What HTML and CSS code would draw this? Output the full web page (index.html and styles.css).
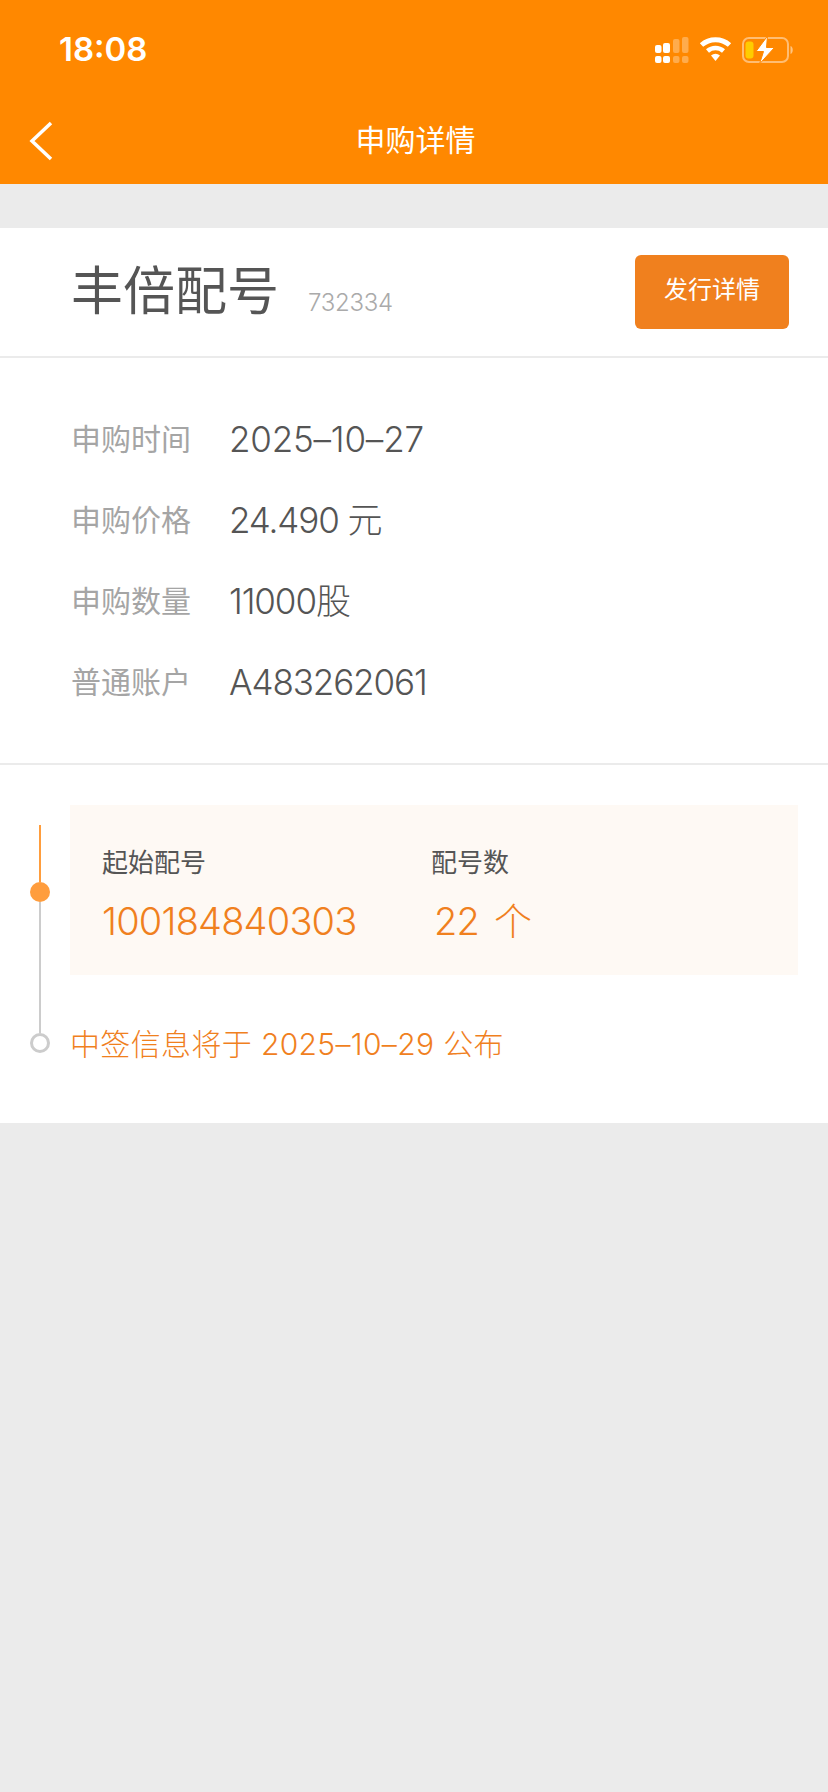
FILE: index.html
```html
<!DOCTYPE html>
<html lang="zh">
<head>
<meta charset="utf-8">
<title>申购详情</title>
<link rel="stylesheet" href="styles.css">
</head>
<body>
<header class="header">
  <div class="status">
    <span class="time">18:08</span>
    <div class="status-icons">
      <svg class="i-signal" width="34" height="26" viewBox="0 0 34 26">
        <g fill="#fff">
          <rect x="0" y="8" width="6.500" height="8" rx="2"/><rect x="8" y="6" width="7" height="10" rx="2"/>
          <rect x="0" y="19" width="6.500" height="7" rx="2"/><rect x="8" y="19" width="7" height="7" rx="2"/>
        </g>
        <g fill="#fff" fill-opacity=".3">
          <rect x="18" y="2" width="6.500" height="14" rx="2"/><rect x="27" y="0" width="6.500" height="16" rx="2"/>
          <rect x="18" y="19" width="6.500" height="7" rx="2"/><rect x="27" y="19" width="6.500" height="7" rx="2"/>
        </g>
      </svg>
      <svg class="i-wifi" width="31" height="26" viewBox="0 0 31 26">
        <path d="M1.500 8 A21 21 0 0 1 29.500 8" fill="none" stroke="#fff" stroke-width="5"/>
        <path d="M7.500 14 A12 12 0 0 1 23.500 14" fill="none" stroke="#fff" stroke-width="4.500"/>
        <path d="M11 18.500 A7 7 0 0 1 20 18.500 L15.500 24 Z" fill="#fff"/>
      </svg>
      <svg class="i-batt" width="52" height="26" viewBox="0 0 52 26">
        <rect x="1" y="1" width="45" height="24" rx="6" fill="none" stroke="#fff" stroke-opacity=".45" stroke-width="2"/>
        <path d="M48.500 9 C51.500 10 51.500 16 48.500 17 Z" fill="#fff" fill-opacity=".5"/>
        <rect x="3.500" y="4.500" width="8" height="17" rx="3" fill="#ffcc00"/>
        <path d="M25.500 -1 L14 14.500 H21.500 L17.500 27 L32.500 10.500 H24.500 Z" fill="#fff" stroke="#ff8800" stroke-width="1"/>
      </svg>
    </div>
  </div>
  <div class="nav">
    <svg class="back" width="24" height="40" viewBox="0 0 24 40">
      <path d="M22 2 L3 20 L22 38" fill="none" stroke="#fff" stroke-width="3.500"/>
    </svg>
    <h1 class="nav-title">申购详情</h1>
  </div>
</header>

<main class="card">
  <section class="head-row">
    <div class="stock">
      <span class="stock-name">丰倍配号</span>
      <span class="stock-code">732334</span>
    </div>
    <button class="detail-btn">发行详情</button>
  </section>

  <section class="info">
    <div class="info-row"><span class="info-label">申购时间</span><span class="info-value info-date">2025–10–27</span></div>
    <div class="info-row"><span class="info-label">申购价格</span><span class="info-value">24.490 元</span></div>
    <div class="info-row"><span class="info-label">申购数量</span><span class="info-value">11000股</span></div>
    <div class="info-row"><span class="info-label">普通账户</span><span class="info-value">A483262061</span></div>
  </section>

  <section class="timeline">
    <div class="rail">
      <span class="seg seg-orange"></span>
      <span class="dot dot-on"></span>
      <span class="seg seg-gray"></span>
      <span class="dot dot-off"></span>
    </div>
    <div class="tl-body">
      <div class="peihao">
        <div class="ph-col ph-start">
          <span class="ph-label">起始配号</span>
          <span class="ph-value">100184840303</span>
        </div>
        <div class="ph-col">
          <span class="ph-label">配号数</span>
          <span class="ph-value ph-count">22 个</span>
        </div>
      </div>
      <p class="notice">中签信息将于 2025–10–29 公布</p>
    </div>
  </section>
</main>
</body>
</html>
```
FILE: styles.css
```css
* { box-sizing: border-box; }
html, body { margin: 0; padding: 0; }
body {
  width: 828px;
  min-height: 1792px;
  background: #ebebeb;
  font-family: Inter, "Noto Sans CJK SC", sans-serif;
  color: #555;
}
.header { height: 184px; background: #ff8800; color: #fff; }
.status {
  height: 100px;
  display: flex;
  align-items: flex-start;
  justify-content: space-between;
  padding: 29px 34px 0 59px;
}
.time { font-size: 33px; line-height: 40px; font-weight: 600; }
.status-icons { display: flex; align-items: center; gap: 11px; padding-top: 8px; }
.i-signal, .i-wifi, .i-batt { display: block; overflow: visible; }
.nav { height: 84px; position: relative; display: flex; align-items: center; justify-content: center; padding: 0 0 4px 3px; }
.back { position: absolute; left: 29px; top: 21px; }
.nav-title { margin: 0; font-size: 30px; font-weight: 400; line-height: 40px; }

.card { margin-top: 44px; background: #fff; }
.head-row {
  height: 130px;
  border-bottom: 2px solid #ebebeb;
  display: flex;
  align-items: flex-start;
  justify-content: space-between;
  padding: 27px 39px 0 71px;
}
.stock { display: flex; align-items: baseline; gap: 29px; padding-top: 5px; }
.stock-name { font-size: 52px; line-height: 64px; font-weight: 400; color: #555; }
.stock-code { font-size: 24px; line-height: 32px; color: #aaa; font-weight: 300; letter-spacing: -0.3px; position: relative; top: 1px; }
.detail-btn {
  width: 154px;
  height: 74px;
  margin: 0;
  border: 0;
  border-radius: 6px;
  background: #f0801e;
  color: #fff;
  font: 400 24px/34px Inter, "Noto Sans CJK SC", sans-serif;
  padding: 0 0 4px;
}
.info {
  height: 407px;
  border-bottom: 2px solid #ebebeb;
  padding: 40px 0 0 71px;
  display: flex;
  flex-direction: column;
}
.info-row { height: 81px; display: flex; align-items: center; }
.info-label { width: 158px; font-size: 30px; line-height: 40px; color: #a5a5a5; font-weight: 400; }
.info-value { font-size: 35px; line-height: 42px; color: #555; font-weight: 300; letter-spacing: -1.1px; }
.info-date { letter-spacing: -0.2px; }

.timeline { height: 358px; display: flex; padding: 40px 30px 0 30px; }
.rail { width: 20px; margin-top: 20px; display: flex; flex-direction: column; align-items: center; }
.seg { width: 2px; display: block; }
.seg-orange { height: 57px; background: #ff9d3d; }
.seg-gray { height: 131px; background: #ccc; }
.dot { width: 20px; height: 20px; border-radius: 50%; display: block; flex: none; }
.dot-on { background: #ff9d3d; }
.dot-off { background: #fff; border: 3px solid #ccc; }
.tl-body { margin-left: 20px; flex: 1; }
.peihao {
  height: 170px;
  background: #fef9f4;
  display: flex;
  padding: 40px 0 0 32px;
}
.ph-col { display: flex; flex-direction: column; }
.ph-start { width: 329px; }
.ph-label { font-size: 26px; line-height: 36px; color: #555; }
.ph-value { font-size: 38px; line-height: 50px; margin-top: 15px; color: #f0801e; font-weight: 300; letter-spacing: -0.8px; }
.ph-count { margin-left: 3px; word-spacing: 5px; }
.notice { margin: 48px 0 0; font-size: 30px; line-height: 42px; color: #f0801e; font-weight: 300; letter-spacing: 0.35px; }
```
